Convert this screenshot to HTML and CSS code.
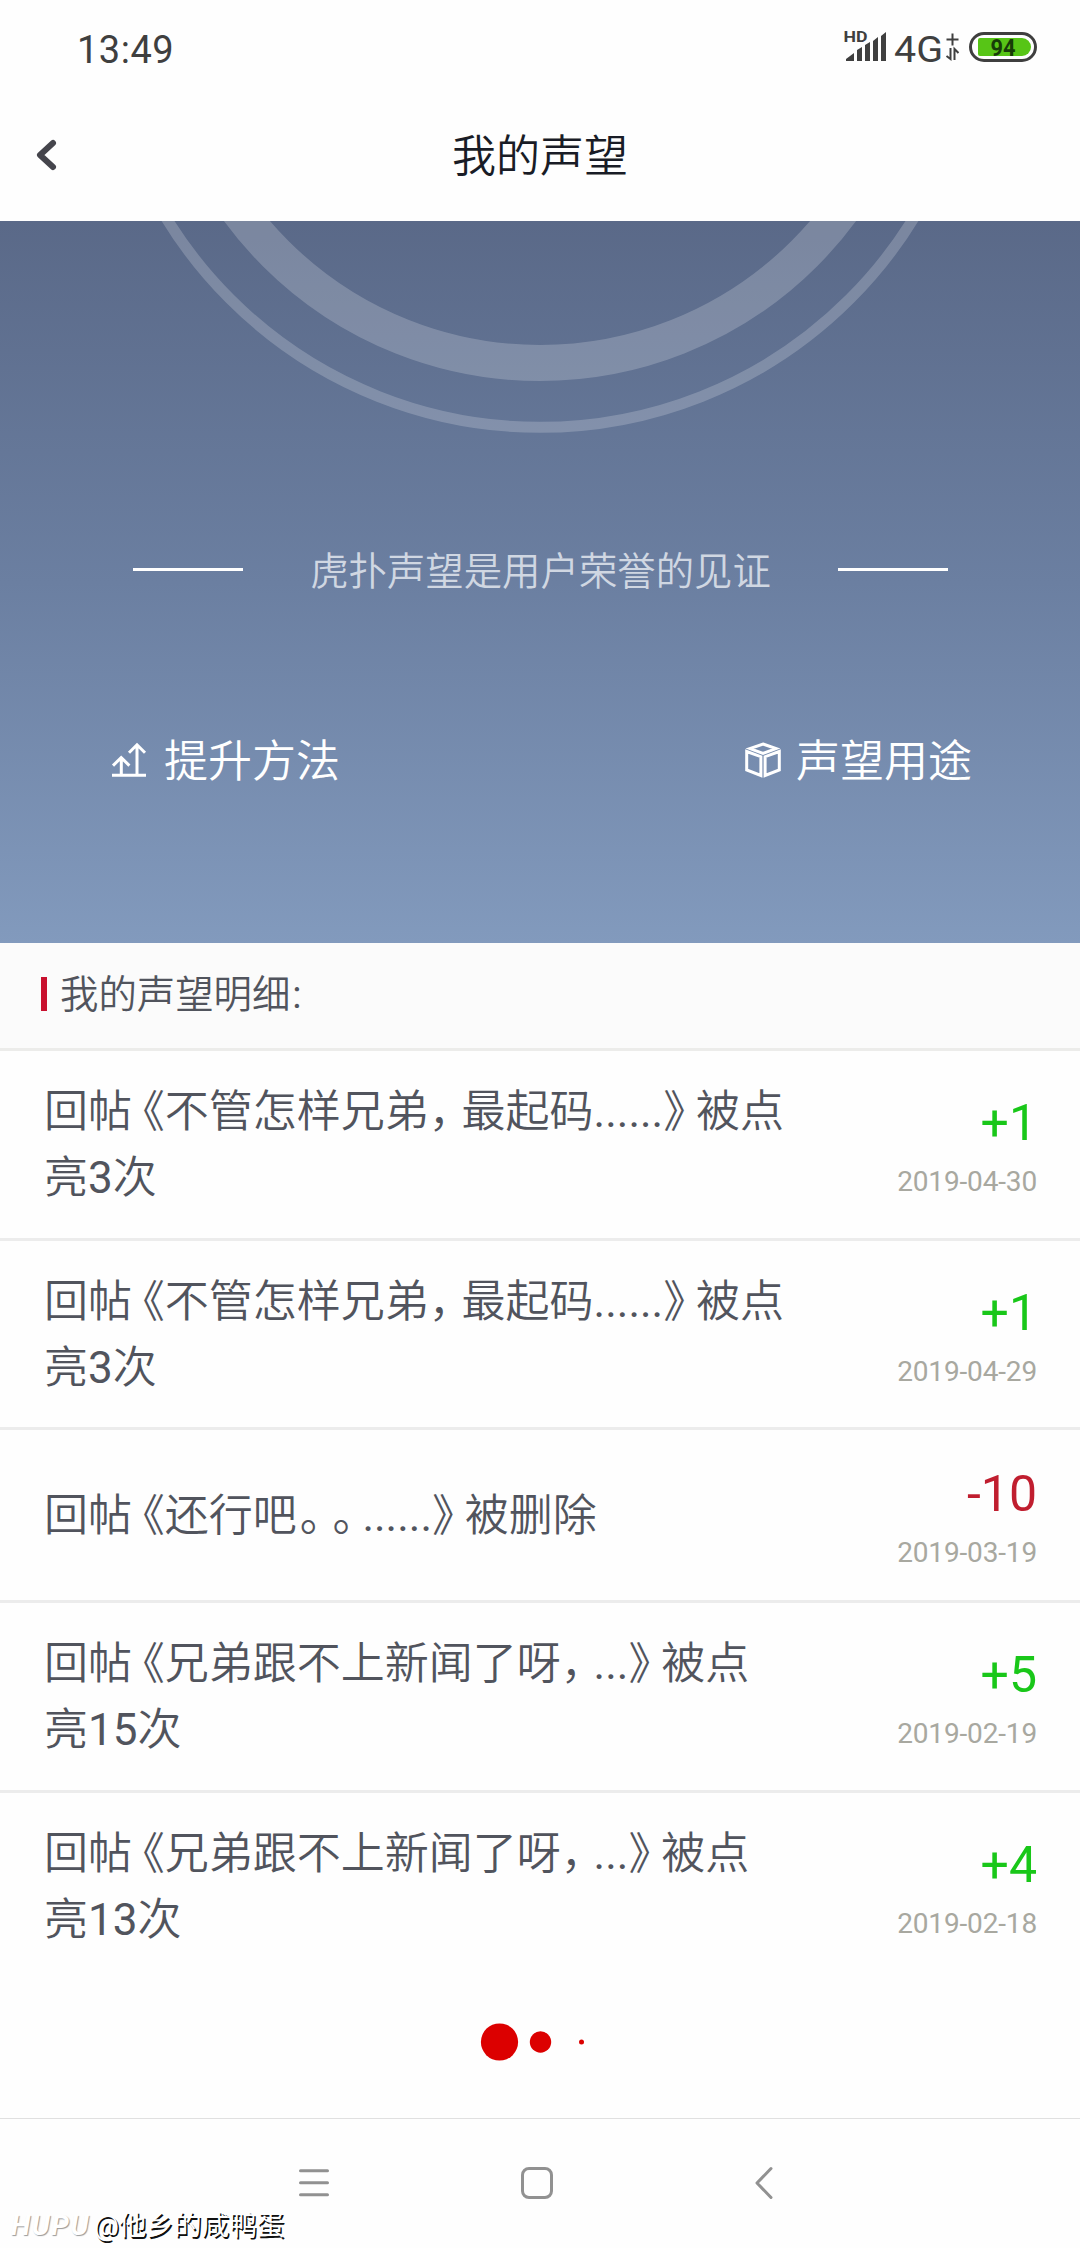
FILE: index.html
```html
<!DOCTYPE html>
<html lang="zh-CN">
<head>
<meta charset="utf-8">
<title>我的声望</title>
<link rel="stylesheet" href="styles.css">
</head>
<body>
<div class="screen">
  <div class="status">
    <span class="clock">13:49</span>
    <svg class="indicators" width="200" height="44" viewBox="840 26 200 44">
      <g fill="#3f3f3f">
        <text class="hd" x="844.5" y="42" textLength="24" lengthAdjust="spacingAndGlyphs">HD</text>
        <path d="M847 61v-2l8-6v8zM858 61V50l5-3v14zM866 61V45l5-3v19zM874 61V41l5-4v24zM882 61V36l5-4v29z"/>
        <text class="net" x="895" y="61.5" textLength="49" lengthAdjust="spacingAndGlyphs">4G</text>
      </g>
      <path d="M947.500 39.500h12M953.500 33.500v12M951.500 48v11l-4-3M955.500 60V49l4 4" fill="none" stroke="#3f3f3f" stroke-width="2"/>
      <rect x="971.500" y="33.500" width="65" height="27" rx="13.500" fill="none" stroke="#3f3f3f" stroke-width="3"/>
      <path d="M979 40a2 2 0 0 1 2-2h42a9 9 0 0 1 0 18h-42a2 2 0 0 1-2-2z" fill="#57c516"/>
      <text class="charge" x="991.500" y="55.500" textLength="25" lengthAdjust="spacingAndGlyphs">94</text>
    </svg>
  </div>
  <div class="header">
    <svg class="back" width="24" height="36" viewBox="0 0 24 36"><path d="M19 6L6 18l13 12" fill="none" stroke="#45454c" stroke-width="6" stroke-linecap="round" stroke-linejoin="round"/></svg>
    <h1 class="title">我的声望</h1>
  </div>

  <div class="hero">
    <svg class="rings" width="1080" height="220" viewBox="0 221 1080 220" fill="none" stroke="#fff" stroke-opacity=".2">
      <circle cx="540" cy="-11" r="374" stroke-width="36"/>
      <circle cx="540" cy="-11" r="438.300" stroke-width="11"/>
    </svg>
    <div class="slogan"><i class="rule"></i><span class="slogan-text">虎扑声望是用户荣誉的见证</span><i class="rule"></i></div>
    <div class="links">
      <div class="link">
        <svg width="36" height="38" viewBox="111 741 36 38" fill="none" stroke="#fff" stroke-width="3"><path d="M112 775.200h34M137 775V745M129 752.800l8-8 8 8M121.300 775V758M113 765.600l8.200-8 8.200 8"/></svg>
        <span class="link-text">提升方法</span>
      </div>
      <div class="link">
        <svg width="38" height="38" viewBox="745 742 38 38" fill="none" stroke="#fff" stroke-width="3"><path d="M764 745l13 4.600-13 4.800-13-4.800zM747.700 752.500l14.200 5.200v18.800l-14.200-5.600zM780.300 752.500l-14.200 5.200v18.800l14.200-5.600z"/></svg>
        <span class="link-text">声望用途</span>
      </div>
    </div>
  </div>

  <div class="section"><i class="mark"></i><h2 class="section-title">我的声望明细<span class="num">:</span></h2></div>

  <div class="list">
    <div class="row">
      <p class="text">回帖<span class="open">《</span>不管怎样兄弟<span class="stop">，</span>最起码<span class="num">......</span><span class="stop">》</span>被点<br>亮<span class="num">3</span>次</p>
      <div class="side"><b class="score">+1</b><span class="date">2019-04-30</span></div>
    </div>
    <div class="row">
      <p class="text">回帖<span class="open">《</span>不管怎样兄弟<span class="stop">，</span>最起码<span class="num">......</span><span class="stop">》</span>被点<br>亮<span class="num">3</span>次</p>
      <div class="side"><b class="score">+1</b><span class="date">2019-04-29</span></div>
    </div>
    <div class="row short">
      <p class="text">回帖<span class="open">《</span>还行吧<span class="stop period">。</span><span class="stop period">。</span><span class="num">......</span><span class="stop">》</span>被删除</p>
      <div class="side"><b class="score minus">-10</b><span class="date">2019-03-19</span></div>
    </div>
    <div class="row">
      <p class="text">回帖<span class="open">《</span>兄弟跟不上新闻了呀<span class="stop">，</span><span class="num">...</span><span class="stop">》</span>被点<br>亮<span class="num">15</span>次</p>
      <div class="side"><b class="score">+5</b><span class="date">2019-02-19</span></div>
    </div>
    <div class="row">
      <p class="text">回帖<span class="open">《</span>兄弟跟不上新闻了呀<span class="stop">，</span><span class="num">...</span><span class="stop">》</span>被点<br>亮<span class="num">13</span>次</p>
      <div class="side"><b class="score">+4</b><span class="date">2019-02-18</span></div>
    </div>
  </div>

  <div class="loading">
    <svg width="120" height="40" viewBox="480 2021.500 120 40" fill="#dc0000"><circle cx="499.500" cy="2041.500" r="18.600"/><circle cx="540.500" cy="2041.500" r="10.700"/><circle cx="581.500" cy="2041.500" r="2.500"/></svg>
  </div>

  <div class="navbar">
    <svg width="1080" height="129" viewBox="0 2119 1080 129" fill="none" stroke="#919191" stroke-width="3" stroke-linecap="round" stroke-linejoin="round">
      <path d="M300.500 2170.700h27M300.500 2182.700h27M300.500 2194.700h27"/>
      <rect x="522.500" y="2168.500" width="29" height="29" rx="6.500"/>
      <path d="M771 2168.500L757 2183l14 14.500"/>
    </svg>
    <div class="watermark"><span class="brand">HUPU</span><span class="author">@他乡的咸鸭蛋</span></div>
  </div>
</div>
</body>
</html>
```
FILE: styles.css
```css
* { box-sizing: border-box; }
body {
  margin: 0;
  background: #fefefe;
  font-family: Roboto, "Noto Sans CJK SC", sans-serif;
  text-spacing-trim: space-all;
  color: #51545d;
}
h1, h2, p { margin: 0; font-weight: 350; }
svg { display: block; flex: none; }
.screen {
  display: flex;
  flex-direction: column;
  width: 1080px;
  height: 2248px;
  overflow: hidden;
}

.status {
  display: flex;
  justify-content: space-between;
  align-items: flex-start;
  height: 88px;
  padding: 26px 41px 0 77px;
}
.clock {
  font-size: 38px;
  font-weight: 380;
  line-height: 48px;
  letter-spacing: 0.5px;
  color: #3f3f3f;
}
.hd { font: 700 15px Roboto, sans-serif; }
.net { font: 380 37px Roboto, sans-serif; }
.charge { font: 700 24px Roboto, sans-serif; fill: #173c08; }

.header {
  display: grid;
  grid-template-columns: 100px 1fr 100px;
  align-items: center;
  height: 133px;
}
.back { margin-left: 34px; }
.title {
  padding-top: 5px;
  font-size: 44px;
  line-height: 66px;
  text-align: center;
  color: #191c26;
}

.hero {
  flex: none;
  height: 722px;
  background: linear-gradient(#5a6988, #6b7fa1 50%, #829abd);
  color: #fff;
}
.slogan {
  display: flex;
  justify-content: space-between;
  align-items: center;
  height: 60px;
  margin-top: 98px;
  padding: 0 132px 0 133px;
}
.rule { width: 110px; height: 3px; background: #fff; }
.slogan-text {
  padding-top: 5px;
  font-size: 38.4px;
  font-weight: 350;
  line-height: 54px;
  color: #d0d7e2;
}
.links {
  display: flex;
  justify-content: space-between;
  margin-top: 131px;
  padding: 0 108px 0 111px;
}
.link {
  display: flex;
  align-items: center;
  gap: 17px;
  height: 60px;
  font-size: 44px;
  font-weight: 350;
  line-height: 56px;
}
.link + .link { gap: 14px; }
.link-text { padding-top: 4px; }

.section {
  display: flex;
  flex: none;
  align-items: center;
  height: 108px;
  padding: 0 0 4px 41px;
  border-bottom: 3px solid #ececea;
  background: #fbfbfb;
}
.mark { width: 6px; height: 34px; background: #c8102e; }
.section-title { margin-left: 13px; padding-top: 2px; font-size: 38.4px; line-height: 60px; }
.num { font-weight: 400; }
.section-title .num { margin-left: 2px; }

.row {
  display: flex;
  justify-content: space-between;
  align-items: center;
  height: 189.6px;
  padding: 0 43px 0 44px;
  border-bottom: 3px solid #ececec;
}
.row.short { height: 172.8px; }
.row:last-child { border-color: transparent; }
.text { padding-top: 2px; font-size: 44px; line-height: 66px; white-space: nowrap; }
/* Half-width punctuation forms, padded to three quarters of an em. */
.open, .stop { font-feature-settings: "halt"; }
.open { margin-left: 10.8px; }
.stop { margin-right: 10.8px; }
.stop.period { margin: 0 7.8px 0 3px; }
.side { display: flex; flex-direction: column; align-items: flex-end; padding-top: 16px; }
.score { font-size: 50px; font-weight: 400; line-height: 60px; color: #19c719; }
.score.minus { color: #c01e2f; }
.date { font-size: 28px; line-height: 58px; letter-spacing: -0.15px; color: #a8a8a0; }

.loading {
  display: flex;
  flex: 1;
  justify-content: center;
  align-items: center;
  padding-bottom: 17px;
}
.navbar {
  position: relative;
  flex: none;
  height: 130px;
  border-top: 1px solid #e0e0e0;
}
.watermark {
  position: absolute;
  left: 11px;
  bottom: 4px;
  display: flex;
  align-items: center;
  line-height: 36px;
  color: #fff;
}
.brand {
  width: 83px;
  font-size: 28px;
  font-style: italic;
  font-weight: 700;
  letter-spacing: 1.6px;
  text-shadow: 1px 1px 1px #999;
}
.author { font-size: 27.6px; text-shadow: 1.5px 1.5px 0.5px #111; }
```
